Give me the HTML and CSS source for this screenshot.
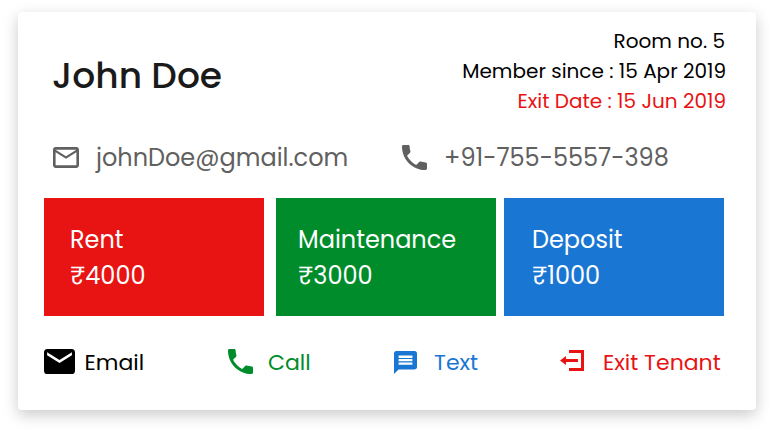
FILE: index.html
```html
<!DOCTYPE html>
<html lang="en">
<head>
<meta charset="utf-8">
<title>Tenant</title>
<link rel="stylesheet" href="styles.css">
</head>
<body>
<article class="card">
  <header class="top">
    <h1 class="name">John Doe</h1>
    <div class="meta">
      <p class="room">Room no. 5</p>
      <p>Member since : 15 Apr 2019</p>
      <p class="exit-date">Exit Date : 15 Jun 2019</p>
    </div>
  </header>
  <div class="contacts">
    <div class="contact"><svg class="mail-line" viewBox="2 4 20 16"><path d="M22 6c0-1.100-.9-2-2-2H4c-1.100 0-2 .9-2 2v12c0 1.100.9 2 2 2h16c1.100 0 2-.9 2-2V6zm-2 0l-8 5-8-5h16zm0 12H4V8l8 5 8-5v10z"/></svg><span>johnDoe@gmail.com</span></div>
    <div class="contact"><svg class="phone" viewBox="3 3 18 18"><path d="M6.620 10.790c1.440 2.830 3.760 5.140 6.590 6.590l2.200-2.200c.27-.27.67-.36 1.020-.24 1.120.37 2.330.57 3.570.57.55 0 1 .45 1 1V20c0 .55-.45 1-1 1C10.610 21 3 13.390 3 4c0-.55.45-1 1-1h3.500c.55 0 1 .45 1 1 0 1.250.2 2.450.57 3.570.11.35.03.74-.25 1.020l-2.200 2.200z"/></svg><span>+91-755-5557-398</span></div>
  </div>
  <div class="tiles">
    <section class="tile rent"><span>Rent</span><span>₹4000</span></section>
    <section class="tile maintenance"><span>Maintenance</span><span>₹3000</span></section>
    <section class="tile deposit"><span>Deposit</span><span>₹1000</span></section>
  </div>
  <nav class="actions">
    <a class="action email"><svg viewBox="2 4 20 16" preserveAspectRatio="none"><path d="M20 4H4c-1.100 0-2 .9-2 2v12c0 1.100.9 2 2 2h16c1.100 0 2-.9 2-2V6c0-1.100-.9-2-2-2zm0 4l-8 5-8-5V6l8 5 8-5v2z"/></svg><span>Email</span></a>
    <a class="action call"><svg viewBox="3 3 18 18"><path d="M6.620 10.790c1.440 2.830 3.760 5.140 6.590 6.590l2.200-2.200c.27-.27.67-.36 1.020-.24 1.120.37 2.330.57 3.570.57.55 0 1 .45 1 1V20c0 .55-.45 1-1 1C10.610 21 3 13.390 3 4c0-.55.45-1 1-1h3.500c.55 0 1 .45 1 1 0 1.250.2 2.450.57 3.570.11.35.03.74-.25 1.020l-2.200 2.200z"/></svg><span>Call</span></a>
    <a class="action text"><svg viewBox="2 2 20 20"><path d="M20 2H4c-1.100 0-2 .9-2 2v18l4-4h14c1.100 0 2-.9 2-2V4c0-1.100-.9-2-2-2zm-2 12H6v-2h12v2zm0-3H6V9h12v2zm0-3H6V6h12v2z"/></svg><span>Text</span></a>
    <a class="action leave"><svg viewBox="0 0 24 21"><path d="M9 0h15v21H9v-3h12V3H9zM0 10.500 6 6v3h12v3H6v3z"/></svg><span>Exit Tenant</span></a>
  </nav>
</article>
</body>
</html>
```
FILE: styles.css
```css
* { box-sizing: border-box; margin: 0; padding: 0; }
body {
  min-height: 434px;
  padding: 12px 18px 24px;
  background: #fff;
  font-family: Poppins, Inter, "Noto Sans", sans-serif;
  color: #000;
}
.card {
  width: 738px;
  height: 398px;
  padding: 14px 26px 0;
  border-radius: 4px;
  background: #fff;
  box-shadow: 0 5px 15px rgba(0, 0, 0, .21);
}
svg { display: block; fill: currentColor; flex: none; }
.top { display: flex; justify-content: space-between; height: 107px; padding: 0 4px 0 8px; }
.name { font-size: 36px; font-weight: 500; line-height: 54px; margin-top: 23px; color: #1a1a1a; }
.meta { font-size: 20px; line-height: 30px; text-align: right; }
.room { padding-right: 1px; }
.exit-date { color: #e81313; }
.contacts { display: grid; grid-template-columns: 349px 1fr; height: 49px; padding-left: 9px; color: #606060; font-size: 24px; }
.contact { display: flex; align-items: center; height: 49px; }
.mail-line { width: 26px; height: 21px; margin-right: 17px; }
.phone { width: 25px; height: 25px; margin-right: 17px; }
.tiles { display: flex; margin-top: 16px; color: #fff; font-size: 24px; line-height: 36px; }
.tile { width: 220px; height: 118px; padding: 24px 26px; display: flex; flex-direction: column; align-items: flex-start; }
.rent { background: #e81313; margin-right: 12px; }
.maintenance { background: #008c2a; margin-right: 8px; padding-left: 22px; }
.deposit { background: #1a76d3; padding-left: 28px; }
.actions { display: grid; grid-template-columns: 184px 166px 166px 1fr; margin-top: 29px; font-size: 22px; line-height: 36px; }
.action { display: flex; align-items: flex-start; white-space: nowrap; }
.action svg { margin-top: 4px; }
.email svg { width: 31px; height: 25px; margin-right: 9.500px; }
.call { color: #008c2a; }
.call svg { width: 25px; height: 25px; margin-right: 15px; }
.text { color: #1a76d3; }
.text svg { width: 23px; height: 23px; margin-top: 6px; margin-right: 17px; }
.leave { color: #e81313; }
.leave svg { width: 24px; height: 21px; margin-top: 5px; margin-right: 19px; }
```
